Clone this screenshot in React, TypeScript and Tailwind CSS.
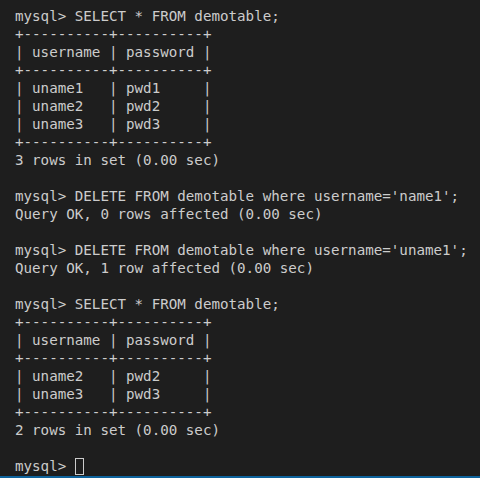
const lines = [
  "mysql> SELECT * FROM demotable;",
  "+----------+----------+",
  "| username | password |",
  "+----------+----------+",
  "| uname1   | pwd1     |",
  "| uname2   | pwd2     |",
  "| uname3   | pwd3     |",
  "+----------+----------+",
  "3 rows in set (0.00 sec)",
  "",
  "mysql> DELETE FROM demotable where username='name1';",
  "Query OK, 0 rows affected (0.00 sec)",
  "",
  "mysql> DELETE FROM demotable where username='uname1';",
  "Query OK, 1 row affected (0.00 sec)",
  "",
  "mysql> SELECT * FROM demotable;",
  "+----------+----------+",
  "| username | password |",
  "+----------+----------+",
  "| uname2   | pwd2     |",
  "| uname3   | pwd3     |",
  "+----------+----------+",
  "2 rows in set (0.00 sec)",
  "",
];

export default function App() {
  return (
    <div className="w-[480px] h-[478px] bg-[#1e1e1e] flex flex-col overflow-hidden">
      <pre className="flex-1 pl-[15px] pt-[7px] text-[14.2px] leading-[18px] text-[#cccccc] font-['DejaVu_Sans_Mono',monospace] whitespace-pre">
        {lines.map((l, i) => (
          <div key={i} className="h-[18px]">{l}</div>
        ))}
        <div className="h-[18px] flex items-center">
          <span>mysql&gt; </span>
          <span className="inline-block w-[9px] h-[17px] border border-[#cccccc]" />
        </div>
      </pre>
      <div className="h-[2px] bg-[#0e639c]" />
    </div>
  );
}
